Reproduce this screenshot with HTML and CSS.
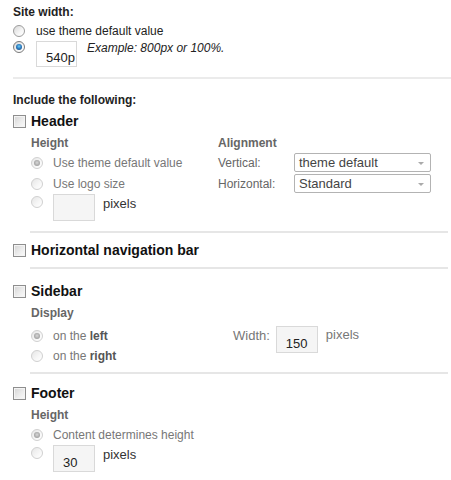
FILE: index.html
```html
<!DOCTYPE html>
<html>
<head>
<meta charset="utf-8">
<title>Layout settings</title>
<link rel="stylesheet" href="styles.css">
</head>
<body>
<div class="page">
  <div class="title">Site width:</div>
  <div class="row r1"><span class="radio"></span><span class="lbl">use theme default value</span></div>
  <div class="row r2"><span class="radio on"></span><span class="tbox white"><span class="tval">540p</span></span><span class="example">Example: 800px or 100%.</span></div>
  <div class="hr-full"></div>

  <div class="title t2">Include the following:</div>

  <div class="sec-head"><span class="check"></span><span class="sec-title">Header</span></div>
  <div class="sub two">
    <div class="col c-left">
      <div class="sub-title">Height</div>
      <div class="opt"><span class="radio dis on"></span><span>Use theme default value</span></div>
      <div class="opt"><span class="radio dis"></span><span>Use logo size</span></div>
      <div class="opt inrow"><span class="radio dis"></span><span class="tbox"></span><span class="px dk">pixels</span></div>
    </div>
    <div class="col c-right">
      <div class="sub-title">Alignment</div>
      <div class="field"><span class="flabel">Vertical:</span><span class="select">theme default</span></div>
      <div class="field"><span class="flabel">Horizontal:</span><span class="select">Standard</span></div>
    </div>
  </div>
  <div class="sep s1"></div>

  <div class="sec-head nav"><span class="check"></span><span class="sec-title">Horizontal navigation bar</span></div>
  <div class="sep s2"></div>

  <div class="sec-head side"><span class="check"></span><span class="sec-title">Sidebar</span></div>
  <div class="sub">
    <div class="sub-title">Display</div>
    <div class="side-grid">
      <div class="col s-left">
        <div class="opt"><span class="radio dis on"></span><span>on the <b>left</b></span></div>
        <div class="opt"><span class="radio dis"></span><span>on the <b>right</b></span></div>
      </div>
      <div class="wfield"><span class="wlabel">Width:</span><span class="tbox"><span class="tval">150</span></span><span class="px">pixels</span></div>
    </div>
  </div>
  <div class="sep s3"></div>

  <div class="sec-head foot"><span class="check"></span><span class="sec-title">Footer</span></div>
  <div class="sub foot-sub">
    <div class="sub-title">Height</div>
    <div class="opt"><span class="radio dis on"></span><span>Content determines height</span></div>
    <div class="opt inrow"><span class="radio dis"></span><span class="tbox"><span class="tval">30</span></span><span class="px dk">pixels</span></div>
  </div>
</div>
</body>
</html>
```

FILE: styles.css
```css
html, body {
  margin: 0;
  padding: 0;
  background: #fff;
}
body {
  font-family: "Liberation Sans", Arial, sans-serif;
  font-size: 12px;
  color: #222;
}
.page {
  padding-left: 13px;
  padding-top: 4px;
  width: 438px;
}
.title {
  font-weight: bold;
  line-height: 16px;
  height: 16px;
  color: #222;
}
.t2 { margin-top: 13px; }

.row {
  display: flex;
  align-items: center;
}
.r1 { margin-top: 1px; height: 20px; }
.r1 .lbl { margin-left: 11px; color: #222; }
.r2 { height: 26px; align-items: flex-start; }
.r2 .tbox { margin-left: 11px; }
.example {
  font-style: italic;
  margin-left: 10px;
  margin-top: 0;
  line-height: 14px;
  color: #222;
}

.hr-full {
  margin-top: 10px;
  height: 2px;
  background: #ebebeb;
}

/* radios */
.radio {
  flex: none;
  box-sizing: border-box;
  width: 12px;
  height: 12px;
  border-radius: 50%;
  border: 1px solid #9c9c9c;
  background: linear-gradient(135deg, #d8d8d8 0%, #f6f6f6 60%, #fff 100%);
  position: relative;
}
.radio.on {
  border-color: #7a7a7a;
}
.radio.on::after {
  content: "";
  position: absolute;
  left: 2px;
  top: 2px;
  width: 6px;
  height: 6px;
  border-radius: 50%;
  background: radial-gradient(circle at 50% 40%, #6fd0f5 0%, #2f7fc4 45%, #143f6e 100%);
}
.radio.dis {
  border-color: #d0d0d0;
  background: linear-gradient(135deg, #e6e6e6 0%, #f7f7f7 60%, #fff 100%);
}
.radio.dis.on::after {
  background: radial-gradient(circle at 50% 45%, #d8d8d8 0%, #a9a9a9 60%, #8e8e8e 100%);
}

/* checkbox */
.check {
  flex: none;
  box-sizing: border-box;
  width: 13px;
  height: 13px;
  border: 1px solid #8e8e8e;
  background: linear-gradient(135deg, #d4d4d4 0%, #ececec 55%, #fbfbfb 100%);
  box-shadow: inset 0 0 0 1px #f4f4f4;
}

/* text boxes */
.tbox {
  flex: none;
  box-sizing: border-box;
  display: inline-block;
  width: 42px;
  height: 27px;
  border: 1px solid #d9d9d9;
  background: #f5f5f5;
  overflow: hidden;
  white-space: nowrap;
  padding: 10px 0 0 9px;
  line-height: 13px;
  font-size: 13px;
  color: #222;
}
.tbox.white {
  width: 41px;
  height: 26px;
  background: #fff;
  padding: 9px 0 0 9px;
}
.tval {
  display: inline-block;
}

/* sections */
.sec-head {
  display: flex;
  align-items: center;
  height: 18px;
  margin-top: 4px;
}
.sec-title {
  margin-left: 5px;
  font-weight: bold;
  font-size: 14px;
  color: #111;
}
.sec-head.nav { margin-top: 8px; }
.sec-head.side { margin-top: 13px; }
.sec-head.foot { margin-top: 10px; }

.sub {
  padding-left: 18px;
}
.sub.two {
  display: grid;
  grid-template-columns: 187px 1fr;
}
.sub-title {
  margin-top: 5px;
  height: 16px;
  line-height: 16px;
  font-weight: bold;
  color: #666;
}
.opt {
  display: flex;
  align-items: center;
  height: 21px;
  color: #777;
}
.opt .radio { margin-right: 10px; }
.c-left .sub-title + .opt,
.foot-sub .sub-title + .opt { margin-top: 1px; }
.opt.inrow {
  align-items: flex-start;
  height: 27px;
}
.opt.inrow .radio { margin-top: 2px; }
.px {
  margin-left: 8px;
  margin-top: 3px;
  line-height: 14px;
  color: #777;
  font-size: 13px;
}
.px.dk { color: #333; }
.opt b {
  font-weight: bold;
  color: #555;
}

.field {
  display: flex;
  align-items: center;
  height: 21px;
  color: #666;
}
.c-right .sub-title + .field { margin-top: 1px; }
.flabel {
  width: 76px;
  flex: none;
}
.select {
  box-sizing: border-box;
  position: relative;
  width: 137px;
  height: 19px;
  line-height: 17px;
  border: 1px solid #b3b3b3;
  border-radius: 2px;
  padding-left: 4px;
  font-size: 13px;
  color: #444;
  background: #fff;
}
.select::after {
  content: "";
  position: absolute;
  right: 6px;
  top: 8px;
  border-left: 3px solid transparent;
  border-right: 3px solid transparent;
  border-top: 3px solid #aaa;
}

.sep {
  margin-left: 17px;
  margin-right: 3px;
  height: 2px;
  background: #e6e6e6;
}
.s1 { margin-top: 10px; }
.s2 { margin-top: 8px; }
.s3 { margin-top: 6px; }

.side-grid {
  display: grid;
  grid-template-columns: 202px 1fr;
  margin-top: 5px;
}
.s-left .opt { height: 20px; }
.wfield {
  display: flex;
  align-items: flex-start;
  color: #777;
}
.wlabel {
  margin-top: 3px;
  margin-right: 6px;
  line-height: 14px;
  font-size: 13px;
}
.wfield .px { margin-top: 2px; }
```
